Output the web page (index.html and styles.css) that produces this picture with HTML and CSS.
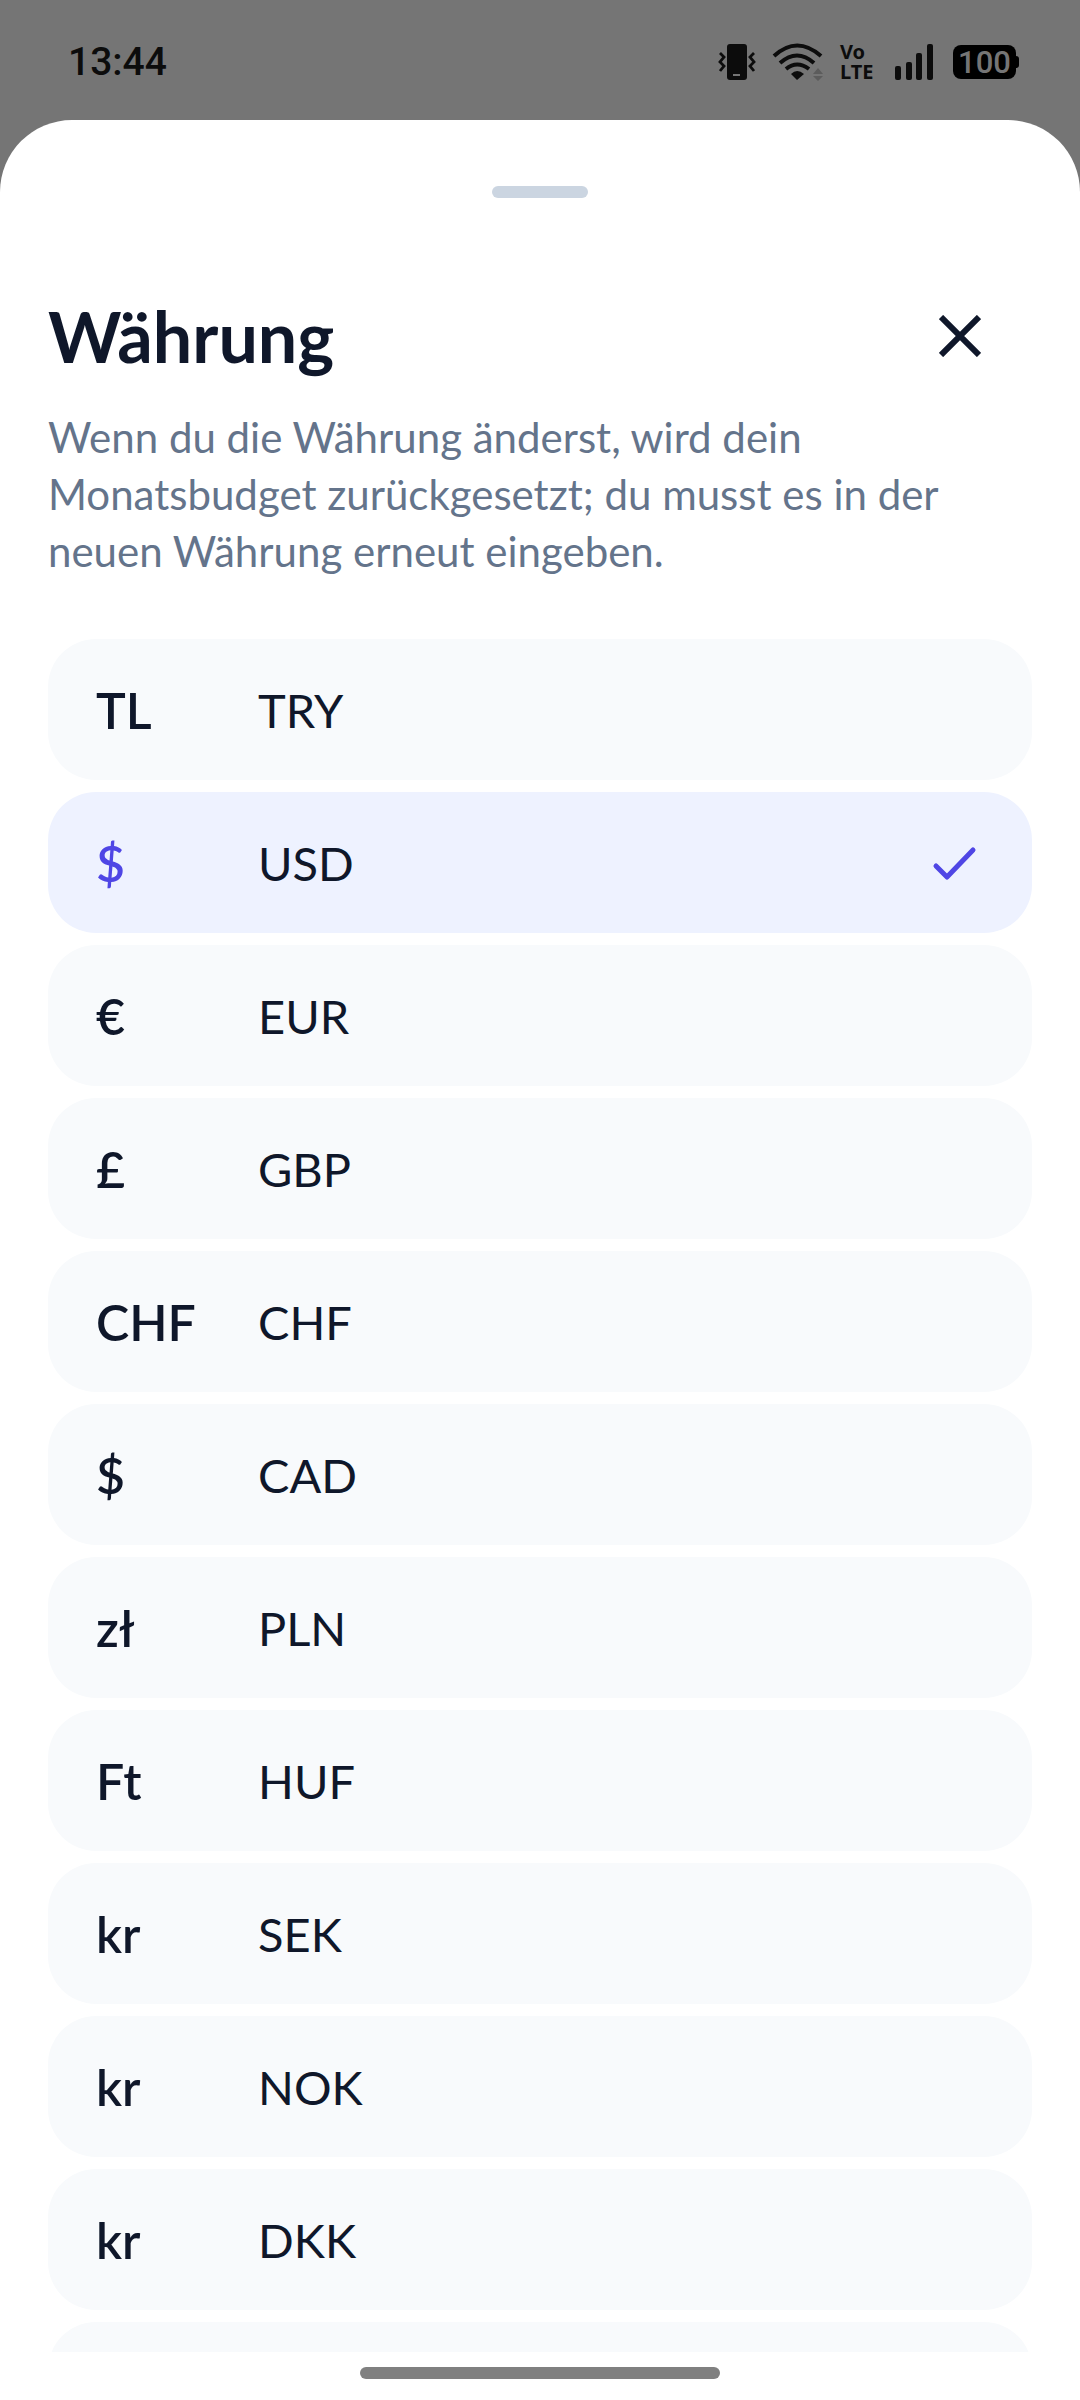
FILE: index.html
```html
<!DOCTYPE html>
<html lang="de">
<head>
  <meta charset="UTF-8" />
  <meta name="viewport" content="width=device-width, initial-scale=1" />
  <title>Währung</title>
  <link rel="stylesheet" href="styles.css">
</head>
<body>

  <!-- Status bar -->
  <header class="status-bar">
    <span class="clock">13:44</span>
    <div class="status-icons">
      <svg class="icon-vibrate" width="38" height="38" viewBox="0 0 38 38" aria-hidden="true">
        <rect x="9" y="1" width="20" height="36" rx="3" fill="currentColor" />
        <path d="M15 32h7" stroke="#757575" stroke-width="2" />
        <path d="M2 10l4 4-4 5 4 4-4 5M36 10l-4 4 4 5-4 4 4 5" fill="none" stroke="currentColor" stroke-width="2.8" />
      </svg>
      <svg class="icon-wifi" width="52" height="38" viewBox="0 0 52 38" aria-hidden="true">
        <g fill="none" stroke="currentColor" stroke-width="4">
          <path d="M2 13Q25-8 49 13" />
          <path d="M8 20Q25 5 42 20" />
          <path d="M14 26Q25 17 37 26" />
        </g>
        <path d="M19 31Q25 25 32 31L25 37Z" fill="currentColor" />
        <path d="M41 31l5-6 5 6zM41 33h10l-5 5z" fill="#5c5c5c" />
      </svg>
      <span class="volte">Vo<br>LTE</span>
      <svg class="icon-signal" width="40" height="38" viewBox="0 0 40 38" fill="currentColor" aria-hidden="true">
        <rect x="1" y="23" width="6" height="14" rx="2" />
        <rect x="12" y="19" width="6" height="18" rx="2" />
        <rect x="22" y="10" width="6" height="27" rx="2" />
        <rect x="33" y="1" width="6" height="36" rx="2" />
      </svg>
      <span class="battery">100</span>
    </div>
  </header>

  <!-- Bottom sheet -->
  <main class="sheet">
    <div class="handle"></div>

    <div class="sheet-header">
      <h1>Währung</h1>
      <button class="close" type="button" aria-label="Schließen">
        <svg width="42" height="42" viewBox="0 0 42 42" aria-hidden="true">
          <path d="M2 2l38 38M40 2L2 40" stroke="currentColor" stroke-width="6" />
        </svg>
      </button>
    </div>

    <p class="hint">Wenn du die Währung änderst, wird dein Monatsbudget zurückgesetzt; du musst es in der neuen Währung erneut eingeben.</p>

    <form class="currency-list">
      <label class="currency"><input type="radio" name="currency" value="TRY"><span class="symbol">TL</span><span class="code">TRY</span></label>
      <label class="currency">
        <input type="radio" name="currency" value="USD" checked><span class="symbol">$</span><span class="code">USD</span>
        <svg class="check" width="60" height="60" viewBox="0 0 60 60" aria-hidden="true">
          <path d="M12 33l11 11 26-27" fill="none" stroke="currentColor" stroke-width="5" stroke-linecap="round" stroke-linejoin="round" />
        </svg>
      </label>
      <label class="currency"><input type="radio" name="currency" value="EUR"><span class="symbol">€</span><span class="code">EUR</span></label>
      <label class="currency"><input type="radio" name="currency" value="GBP"><span class="symbol">£</span><span class="code">GBP</span></label>
      <label class="currency"><input type="radio" name="currency" value="CHF"><span class="symbol">CHF</span><span class="code">CHF</span></label>
      <label class="currency"><input type="radio" name="currency" value="CAD"><span class="symbol">$</span><span class="code">CAD</span></label>
      <label class="currency"><input type="radio" name="currency" value="PLN"><span class="symbol">zł</span><span class="code">PLN</span></label>
      <label class="currency"><input type="radio" name="currency" value="HUF"><span class="symbol">Ft</span><span class="code">HUF</span></label>
      <label class="currency"><input type="radio" name="currency" value="SEK"><span class="symbol">kr</span><span class="code">SEK</span></label>
      <label class="currency"><input type="radio" name="currency" value="NOK"><span class="symbol">kr</span><span class="code">NOK</span></label>
      <label class="currency"><input type="radio" name="currency" value="DKK"><span class="symbol">kr</span><span class="code">DKK</span></label>
      <div class="currency" aria-hidden="true"></div>
    </form>

    <!-- Gesture bar -->
    <div class="nav-bar"><div class="nav-pill"></div></div>
  </main>

</body>
</html>
```
FILE: styles.css
```css
/* Reset */
* {
  margin: 0;
  padding: 0;
  box-sizing: border-box;
}

:root {
  --color-backdrop: #757575;
  --color-text: #0f172a;
  --color-muted: #64748b;
  --color-card: #f8fafc;
  --color-selected: #eef2ff;
  --color-accent: #4f46e5;
  --color-handle: #cbd5e1;
}

body {
  height: 100vh;
  display: flex;
  flex-direction: column;
  background: var(--color-backdrop);
  color: var(--color-text);
  font-family: Lato, sans-serif;
}

/* Status bar */
.status-bar {
  flex: none;
  height: 120px;
  padding: 3px 60px 0 68px;
  display: flex;
  align-items: center;
  justify-content: space-between;
  color: #0c0c0c;
}

.clock {
  font: 500 39px Roboto, sans-serif;
}

.status-icons {
  display: flex;
  align-items: center;
}

.icon-wifi {
  margin-left: 16px;
}

.volte {
  width: 34px;
  margin: 0 20px 0 16px;
  font: 700 20px/20px "Noto Sans", sans-serif;
}

.battery {
  position: relative;
  width: 63px;
  height: 34px;
  margin: 0 4px 0 19px;
  border-radius: 8px;
  background: #000;
  color: var(--color-backdrop);
  font: 500 31px/36px Roboto, sans-serif;
  text-align: center;
}

.battery::after {
  content: "";
  position: absolute;
  top: 11px;
  right: -3px;
  width: 3px;
  height: 12px;
  border-radius: 0 3px 3px 0;
  background: #000;
}

/* Sheet */
.sheet {
  flex: 1;
  min-height: 0;
  padding: 66px 48px 0;
  display: flex;
  flex-direction: column;
  border-radius: 72px 72px 0 0;
  background: #fff;
}

.handle {
  flex: none;
  align-self: center;
  width: 96px;
  height: 12px;
  border-radius: 6px;
  background: var(--color-handle);
}

.sheet-header {
  margin-top: 93px;
  display: flex;
  align-items: center;
  justify-content: space-between;
}

h1 {
  font-size: 70px;
  font-weight: 700;
  line-height: 90px;
}

.close {
  width: 144px;
  height: 90px;
  display: flex;
  align-items: center;
  justify-content: center;
  border: none;
  background: transparent;
  color: inherit;
  cursor: pointer;
}

.hint {
  margin-top: 28px;
  color: var(--color-muted);
  font-size: 42px;
  font-weight: 400;
  line-height: 57px;
}

/* Currency list */
.currency-list {
  flex: 1;
  min-height: 0;
  margin-top: 59px;
  display: flex;
  flex-direction: column;
  gap: 12px;
  overflow-y: auto;
  scrollbar-width: none;
}

.currency {
  flex: none;
  position: relative;
  min-height: 141px;
  padding: 0 48px;
  display: flex;
  align-items: center;
  border-radius: 48px;
  background: var(--color-card);
  cursor: pointer;
}

.currency input {
  position: absolute;
  inset: 0;
  appearance: none;
  border-radius: 48px;
  cursor: pointer;
}

.symbol {
  width: 162px;
  font-size: 50px;
  font-weight: 600;
  line-height: 66px;
}

.code {
  flex: 1;
  font-size: 47px;
  font-weight: 400;
  line-height: 66px;
}

.currency:has(input:checked) {
  background: var(--color-selected);
}

input:checked + .symbol,
.check {
  color: var(--color-accent);
}

/* Gesture bar */
.nav-bar {
  flex: none;
  height: 48px;
  padding-top: 15px;
}

.nav-pill {
  width: 360px;
  height: 12px;
  margin: 0 auto;
  border-radius: 6px;
  background: #808080;
}
```
